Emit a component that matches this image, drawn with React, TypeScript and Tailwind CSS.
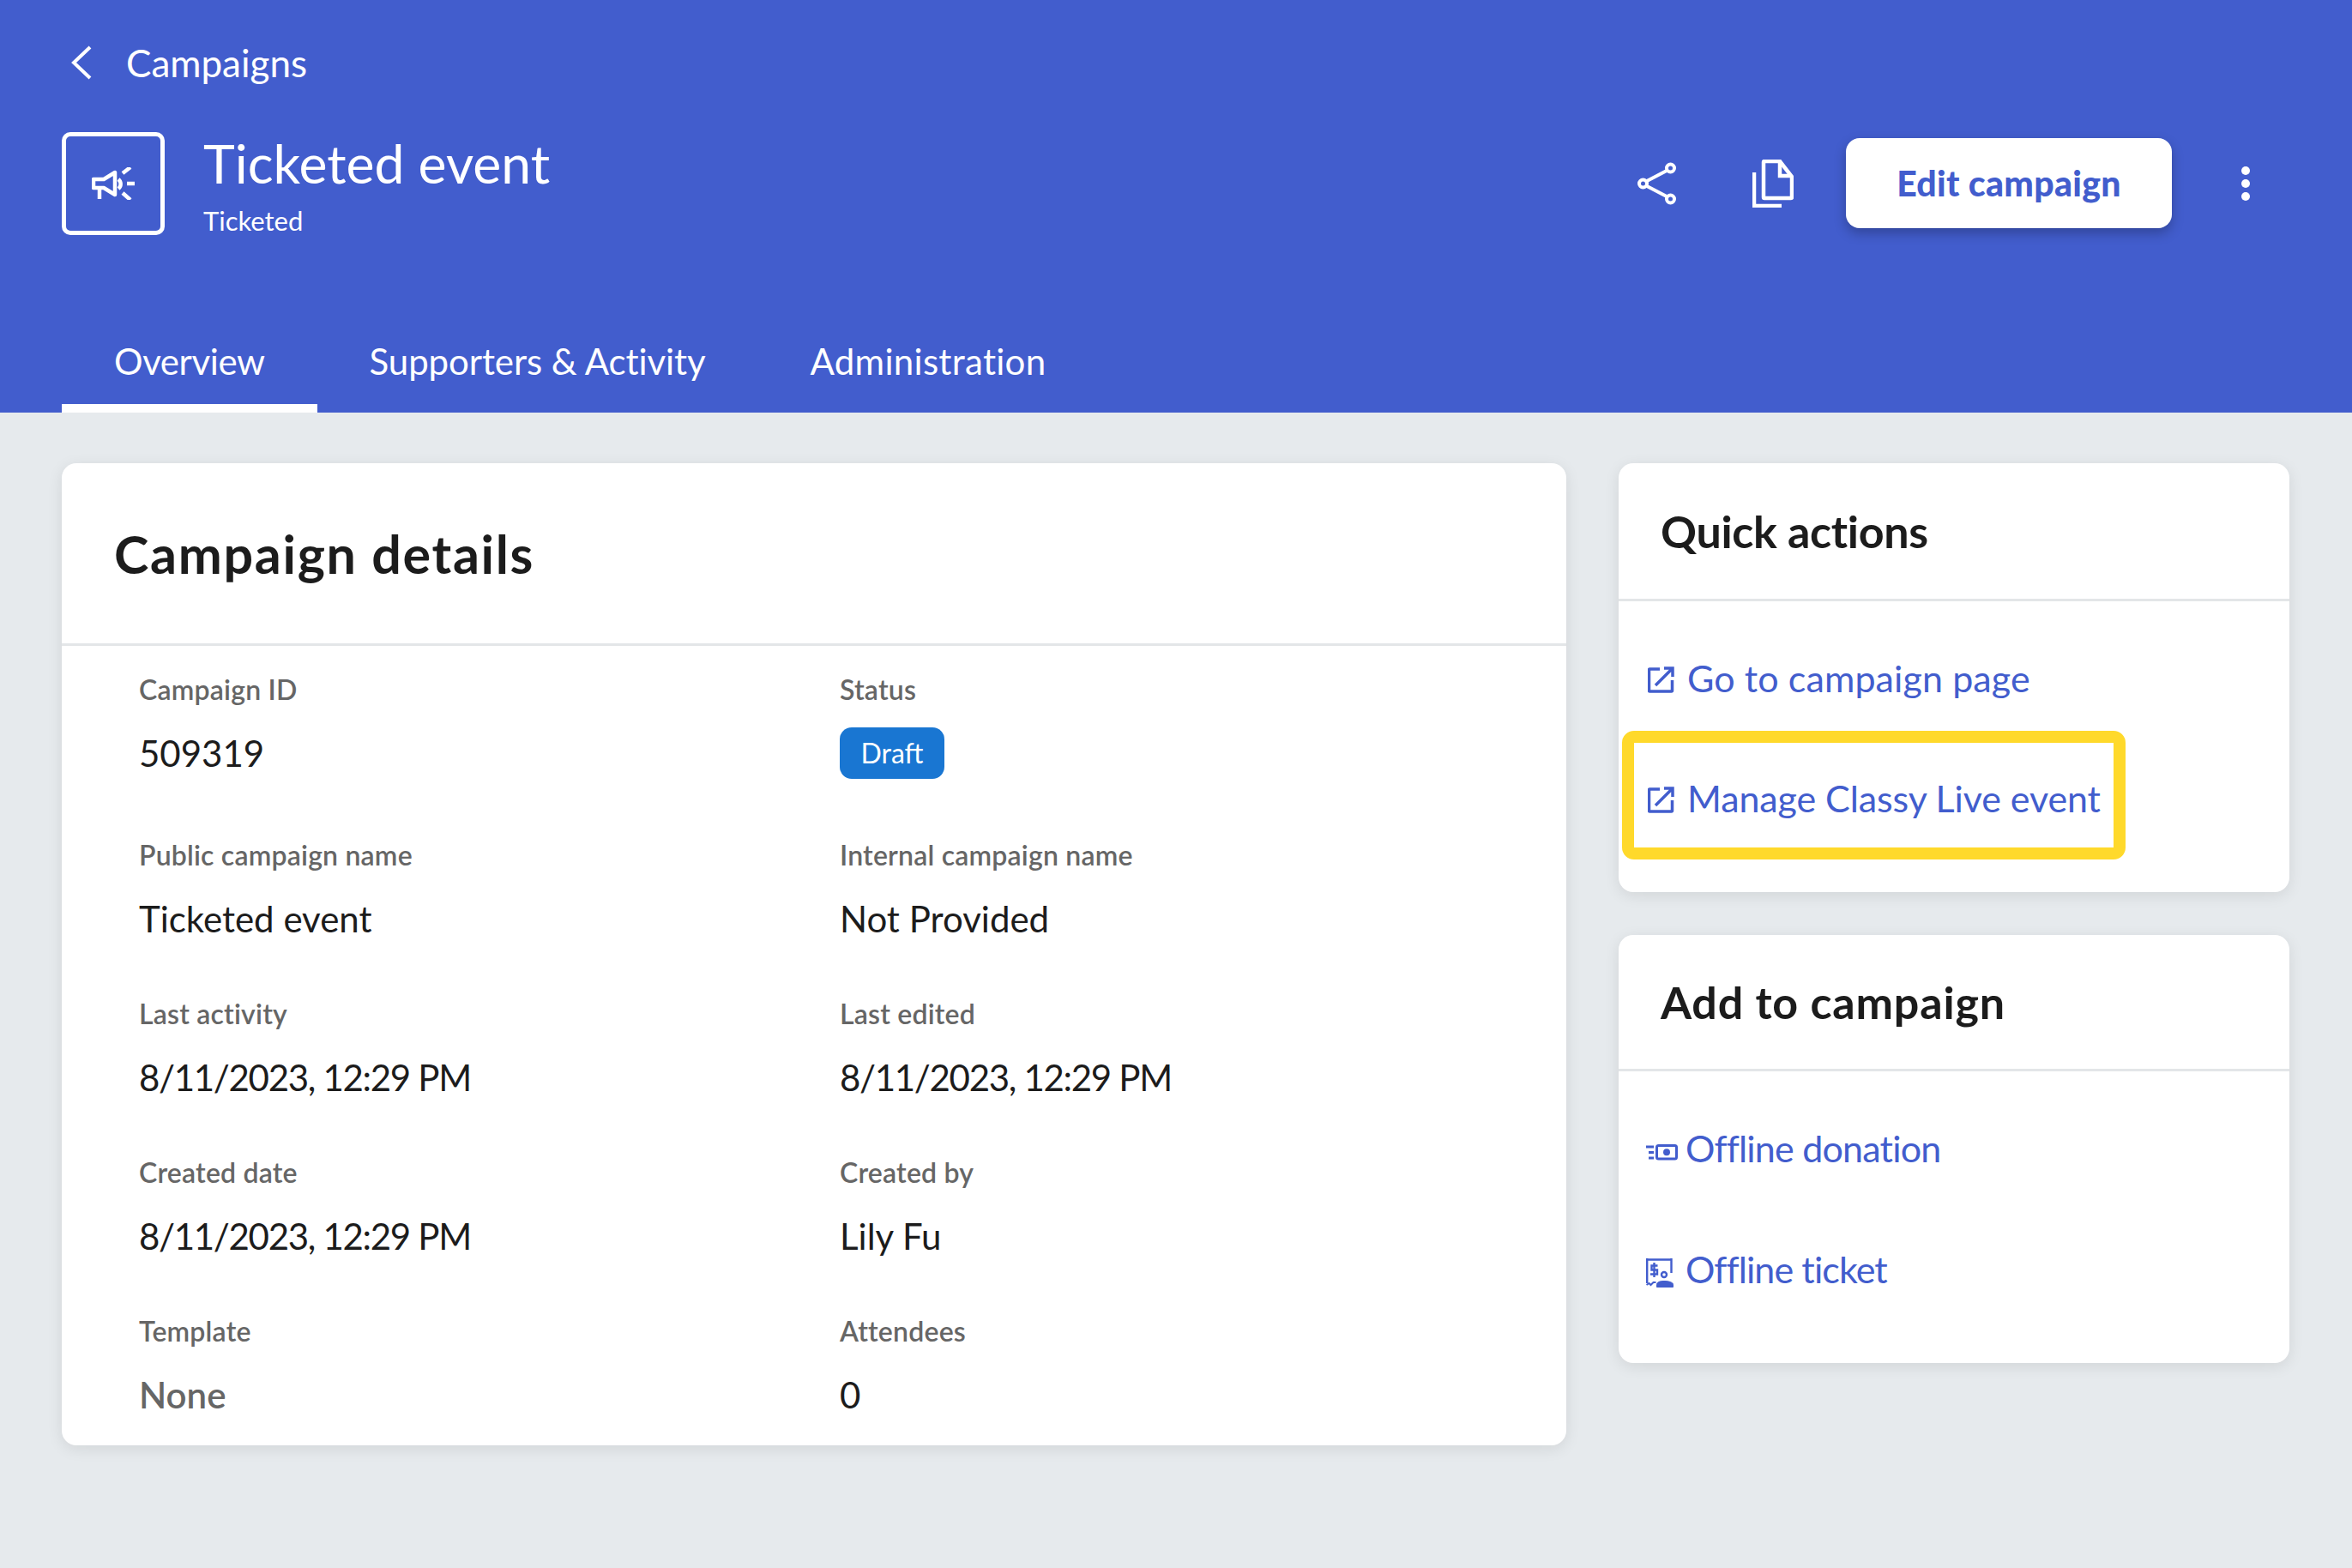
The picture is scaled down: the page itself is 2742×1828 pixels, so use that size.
import { ReactNode } from 'react';

const font = { fontFamily: 'Lato, "Noto Sans", sans-serif' };

function ExternalIcon() {
  return (
    <svg viewBox="0 0 31 31" className="mt-[4px] h-[31px] w-[31px] shrink-0" fill="none" stroke="#425dcd" strokeWidth="3.5">
      <path d="M14 3H2.500a1 1 0 0 0-1 1v24a1 1 0 0 0 1 1h25a1 1 0 0 0 1-1V16" />
      <path d="M19 2h10v10M28.500 2.500 9 22" />
    </svg>
  );
}

function MoneyIcon() {
  return (
    <svg viewBox="0 0 37 19" className="mt-[9px] h-[19px] w-[37px] shrink-0" fill="none" stroke="#425dcd">
      <path d="M0 3h9M3 9.500h6M3 16h6" strokeWidth="3" />
      <rect x="12.500" y="1.500" width="23" height="15.500" rx="2" strokeWidth="3" />
      <circle cx="24" cy="9.300" r="4" fill="#425dcd" stroke="none" />
    </svg>
  );
}

function TicketIcon() {
  return (
    <svg viewBox="0 0 32 35" className="mt-[9px] h-[35px] w-[32px] shrink-0" fill="none" stroke="#425dcd">
      <path d="M1.200 1v29M29.500 1v17M1 2.500h29" strokeWidth="2.400" />
      <path d="M0.500 32l3-2 2 2 3-3h3" strokeWidth="2" />
      <path d="M13.500 9.500H6.500v5h6.500v5H5M9.500 6v17" strokeWidth="2.400" />
      <circle cx="21" cy="20" r="3" strokeWidth="2.400" />
      <path d="M12.500 34.500v-3c0-2.500 3-4 8.500-4s10.500 1.500 10.500 4v3z" fill="#425dcd" strokeWidth="1" />
    </svg>
  );
}

function ActionLink({ icon, label, className, textClass }: { icon: ReactNode; label: string; className: string; textClass: string }) {
  return (
    <div className={`flex items-center ${className}`}>
      <span className="flex w-[46px] items-center">{icon}</span>
      <span className={`text-[43px] leading-none text-[#425dcd] ${textClass}`}>{label}</span>
    </div>
  );
}

function Field({ label, children, className = '' }: { label: string; children: ReactNode; className?: string }) {
  return (
    <div className={className}>
      <div className="h-[40px] text-[32px] leading-[40px] font-semibold tracking-[0.2px] text-[#666666]">{label}</div>
      {children}
    </div>
  );
}

function Value({ children, className = 'text-[#1c1c1c]' }: { children: ReactNode; className?: string }) {
  return <div className={`mt-[34px] h-[40px] text-[42px] leading-[40px] ${className}`}>{children}</div>;
}

const dateClass = 'text-[#1c1c1c] tracking-[-1.3px]';

export default function App() {
  return (
    <div className="min-h-[1828px] bg-[#e6eaed]" style={font}>
      <header className="h-[481px] bg-[#425dcd] text-white">
        <div className="flex h-[146px] items-center pl-[83px]">
          <svg viewBox="0 0 24 40" className="h-[40px] w-[24px]" fill="none" stroke="white" strokeWidth="4">
            <path d="M22 2 3 20l19 18" />
          </svg>
          <span className="ml-[40px] text-[44px] leading-none">Campaigns</span>
        </div>
        <div className="flex h-[120px] items-start pr-[119px] pl-[72px]">
          <div className="mt-[8px] flex h-[120px] w-[120px] items-center justify-center rounded-[10px] border-[5px] border-white">
            <svg viewBox="0 0 50 38" className="h-[38px] w-[50px]" fill="none" stroke="white" strokeWidth="4.500">
              <path d="M2 14h12L27 6v26L14 24H2z" strokeLinejoin="round" />
              <path d="M9 24v13M31 14a7 7 0 0 1 0 11M36 7l9-7M41 19h9M36 30l9 8" />
            </svg>
          </div>
          <div className="ml-[45px]">
            <div className="mt-[6px] text-[62.500px] leading-[76px]">Ticketed event</div>
            <div className="mt-[9px] text-[31px] leading-[40px]">Ticketed</div>
          </div>
          <div className="mt-[15px] ml-auto flex items-center">
            <svg viewBox="0 0 46 50" className="h-[50px] w-[46px]" fill="none" stroke="white" strokeWidth="4">
              <circle cx="6.500" cy="25" r="4.500" />
              <circle cx="38.500" cy="7" r="4.500" />
              <circle cx="38.500" cy="43" r="4.500" />
              <path d="M11 22 34 10M11 28l23 12" />
            </svg>
            <svg viewBox="0 0 48 56" className="ml-[88px] h-[56px] w-[48px]" fill="none" stroke="white" strokeWidth="4.500">
              <path d="M13 3a1 1 0 0 1 1-1h18l14 18v24a1 1 0 0 1-1 1H14a1 1 0 0 1-1-1z" />
              <path d="M32 2v17h14M2 15v39h32" />
            </svg>
            <button className="ml-[61px] h-[105px] w-[380px] rounded-[16px] bg-white text-[41px] font-black tracking-[0.3px] text-[#425dcd] shadow-[0_6px_14px_rgba(0,0,0,0.25)]">
              Edit campaign
            </button>
            <div className="ml-[81px] flex w-[10px] flex-col gap-[5px]">
              <span className="h-[10px] w-[10px] rounded-full bg-white" />
              <span className="h-[10px] w-[10px] rounded-full bg-white" />
              <span className="h-[10px] w-[10px] rounded-full bg-white" />
            </div>
          </div>
        </div>
        <nav className="mt-[88px] flex h-[127px] pl-[72px] text-[42px]">
          <div className="flex items-center border-b-[10px] border-white px-[61px] pt-[17px] tracking-[-0.4px]">Overview</div>
          <div className="flex items-center px-[61px] pt-[7px] tracking-[-0.1px]">Supporters &amp; Activity</div>
          <div className="flex items-center px-[61px] pt-[7px] tracking-[0.3px]">Administration</div>
        </nav>
      </header>

      <main className="flex items-start gap-[61px] pt-[59px] pr-[73px] pl-[72px]">
        <section className="h-[1145px] w-[1754px] rounded-[17px] bg-white shadow-[0_4px_18px_rgba(0,0,0,0.09)]">
          <div className="flex h-[213px] items-center border-b-[3px] border-[#e3e6e8] pl-[61px]">
            <h1 className="text-[61px] leading-none font-bold tracking-[1.7px] text-[#1c1c1c]">Campaign details</h1>
          </div>
          <div className="grid grid-cols-[817px_1fr] pt-[31px] pl-[90px]">
            <Field label="Campaign ID" className="h-[193px]">
              <Value>509319</Value>
            </Field>
            <Field label="Status" className="h-[193px]">
              <div className="mt-[24px] flex h-[60px] w-[122px] items-center justify-center rounded-[14px] bg-[#1976d2] text-[32px] text-white">
                Draft
              </div>
            </Field>
            <Field label="Public campaign name" className="h-[185px]">
              <Value>Ticketed event</Value>
            </Field>
            <Field label="Internal campaign name" className="h-[185px]">
              <Value>Not Provided</Value>
            </Field>
            <Field label="Last activity" className="h-[185px]">
              <Value className={dateClass}>8/11/2023, 12:29 PM</Value>
            </Field>
            <Field label="Last edited" className="h-[185px]">
              <Value className={dateClass}>8/11/2023, 12:29 PM</Value>
            </Field>
            <Field label="Created date" className="h-[185px]">
              <Value className={dateClass}>8/11/2023, 12:29 PM</Value>
            </Field>
            <Field label="Created by" className="h-[185px]">
              <Value>Lily Fu</Value>
            </Field>
            <Field label="Template">
              <Value className="font-semibold text-[#666666]">None</Value>
            </Field>
            <Field label="Attendees">
              <Value>0</Value>
            </Field>
          </div>
        </section>

        <aside className="flex w-[782px] flex-col gap-[50px]">
          <section className="relative h-[500px] rounded-[17px] bg-white shadow-[0_4px_18px_rgba(0,0,0,0.09)]">
            <div className="flex h-[161px] items-center border-b-[3px] border-[#e3e6e8] pl-[49px]">
              <h2 className="text-[52px] leading-none font-bold tracking-[-0.3px] text-[#1c1c1c]">Quick actions</h2>
            </div>
            <ActionLink icon={<ExternalIcon />} label="Go to campaign page" textClass="tracking-[0.1px]" className="mt-[68px] ml-[34px]" />
            <ActionLink icon={<ExternalIcon />} label="Manage Classy Live event" textClass="tracking-[-0.1px]" className="mt-[97px] ml-[34px]" />
            <div className="absolute top-[312px] left-[4px] h-[150px] w-[587px] rounded-[14px] border-[14px] border-[#ffd92b]" />
          </section>
          <section className="h-[499px] rounded-[17px] bg-white shadow-[0_4px_18px_rgba(0,0,0,0.09)]">
            <div className="flex h-[159px] items-center border-b-[3px] border-[#e3e6e8] pl-[49px]">
              <h2 className="text-[52px] leading-none font-bold tracking-[0.8px] text-[#1c1c1c]">Add to campaign</h2>
            </div>
            <ActionLink icon={<MoneyIcon />} label="Offline donation" textClass="tracking-[-0.8px]" className="mt-[68px] ml-[32px]" />
            <ActionLink icon={<TicketIcon />} label="Offline ticket" textClass="tracking-[-0.9px]" className="mt-[97px] ml-[32px]" />
          </section>
        </aside>
      </main>
    </div>
  );
}
